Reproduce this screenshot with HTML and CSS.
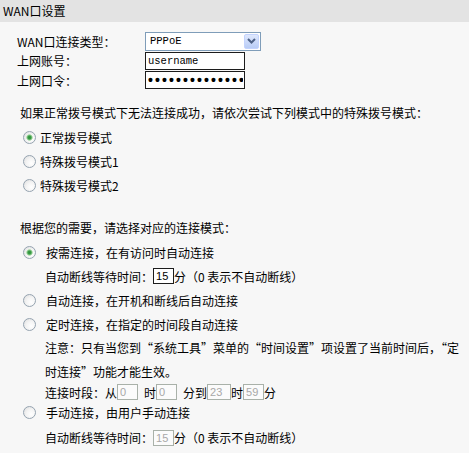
FILE: index.html
```html
<!DOCTYPE html>
<html lang="zh-CN">
<head>
<meta charset="utf-8">
<title>WAN口设置</title>
<link rel="stylesheet" href="styles.css">
</head>
<body>
<div class="title">WAN口设置</div>

<div class="basic">
  <div class="field field-tall">
    <span class="field-label">WAN口连接类型：</span>
    <div class="select">
      <span class="select-value">PPPoE</span>
      <span class="select-btn">
        <svg width="9" height="6" viewBox="0 0 9 6"><path d="M1 1 L4.5 4.5 L8 1" fill="none" stroke="#4d6185" stroke-width="2"/></svg>
      </span>
    </div>
  </div>
  <div class="field">
    <span class="field-label">上网账号：</span>
    <input class="text-input" type="text" value="username">
  </div>
  <div class="field field-tall">
    <span class="field-label">上网口令：</span>
    <input class="text-input pass" type="password" value="abcdefghijklmn">
  </div>
</div>

<div class="section">
  <div class="prompt prompt-first">如果正常拨号模式下无法连接成功，请依次尝试下列模式中的特殊拨号模式：</div>
  <div class="opt"><span class="radio checked"></span>正常拨号模式</div>
  <div class="opt"><span class="radio"></span>特殊拨号模式1</div>
  <div class="opt"><span class="radio"></span>特殊拨号模式2</div>

  <div class="prompt prompt-second">根据您的需要，请选择对应的连接模式：</div>
  <div class="opt opt-wide"><span class="radio checked"></span>按需连接，在有访问时自动连接</div>
  <div class="sub">自动断线等待时间：<input class="num" type="text" value="15">分（0 表示不自动断线）</div>
  <div class="opt opt-wide"><span class="radio"></span>自动连接，在开机和断线后自动连接</div>
  <div class="opt opt-wide"><span class="radio"></span>定时连接，在指定的时间段自动连接</div>
  <div class="note">注意：只有当您到“系统工具”菜单的“时间设置”项设置了当前时间后，“定<br>时连接”功能才能生效。</div>
  <div class="sub sub-short">连接时段：从<input class="num" type="text" value="0" disabled><span class="gap">时</span><input class="num" type="text" value="0" disabled><span class="gap">分到</span><input class="num num-wide" type="text" value="23" disabled>时<input class="num" type="text" value="59" disabled>分</div>
  <div class="opt opt-wide opt-tall"><span class="radio"></span>手动连接，由用户手动连接</div>
  <div class="sub sub-last">自动断线等待时间：<input class="num" type="text" value="15" disabled>分（0 表示不自动断线）</div>
</div>
</body>
</html>
```
FILE: styles.css
```css
* { box-sizing: border-box; }

html, body {
  margin: 0;
  background: #f7f7f7;
}

body {
  width: 469px;
  height: 453px;
  overflow: hidden;
  font-family: "Noto Sans CJK SC", "Liberation Sans", sans-serif;
  font-size: 12px;
  color: #000;
}

.title {
  height: 22px;
  line-height: 21px;
  padding-left: 3px;
  background: #e3e3e3;
}

.basic {
  padding: 9px 0 0 17px;
}

.field {
  display: flex;
  align-items: center;
  height: 19px;
}

.field-tall { height: 20px; }

.field-label {
  width: 128px;
}

.select {
  width: 116px;
  height: 19px;
  border: 1px solid #7f9db9;
  background: #fff;
  display: flex;
  align-items: center;
  justify-content: space-between;
  padding: 0 1px 0 4px;
}

.select-value,
.text-input {
  font-family: "Liberation Mono", monospace;
  font-size: 10.5px;
}

.select-btn {
  width: 15px;
  height: 15px;
  border: 1px solid #c3d3fd;
  border-radius: 2px;
  background: linear-gradient(#dfe8fd, #b8ccf6);
  display: flex;
  align-items: center;
  justify-content: center;
}

.text-input {
  width: 100px;
  height: 18px;
  border: 1px solid #1c1c1c;
  background: #fff;
  padding: 0 2px;
  margin: 0;
  color: #000;
  outline: none;
}

.text-input.pass {
  font-family: "Liberation Sans", sans-serif;
  font-size: 14px;
  font-weight: bold;
  letter-spacing: 2.1px;
  padding: 0 1px 0 2px;
}

.section {
  padding-left: 20px;
}

.prompt {
  height: 24px;
  line-height: 24px;
  white-space: nowrap;
}

.prompt-first { margin-top: 11px; }
.prompt-second { margin-top: 19px; }

.opt {
  display: flex;
  align-items: center;
  height: 24px;
  padding-left: 3px;
  gap: 4px;
  white-space: nowrap;
}

.opt-wide { gap: 10px; }
.opt-tall { height: 25px; }

.radio {
  width: 13px;
  height: 13px;
  flex: none;
  border-radius: 50%;
  border: 1px solid #95a3b0;
  background: radial-gradient(circle at 65% 65%, #ffffff 0%, #f4f4f4 45%, #dcdcdc 100%);
}

.radio.checked {
  background:
    radial-gradient(circle at 50% 50%, #2f8f3c 0, #3c9e47 1.6px, #a8d8a6 2.8px, rgba(255,255,255,0) 3.6px),
    radial-gradient(circle at 65% 65%, #ffffff 0%, #f4f4f4 45%, #dcdcdc 100%);
}

.sub {
  display: flex;
  align-items: center;
  height: 24px;
  padding-left: 25px;
  white-space: nowrap;
}

.sub-short { height: 16px; }
.sub-last { height: 25px; }

.note {
  padding-left: 25px;
  line-height: 24px;
  white-space: nowrap;
}

.num {
  width: 21px;
  height: 16px;
  margin: 0;
  padding: 0 0 0 2px;
  border: 1px solid #1c1c1c;
  background: #fff;
  font-family: "Liberation Sans", sans-serif;
  font-size: 11px;
  color: #000;
  outline: none;
}

.num:disabled {
  border-color: #a9b1a9;
  color: #a8a8a8;
  background: #fbfbfb;
}

.num-wide { width: 24px; }

.gap {
  margin-left: 6px;
}
```
